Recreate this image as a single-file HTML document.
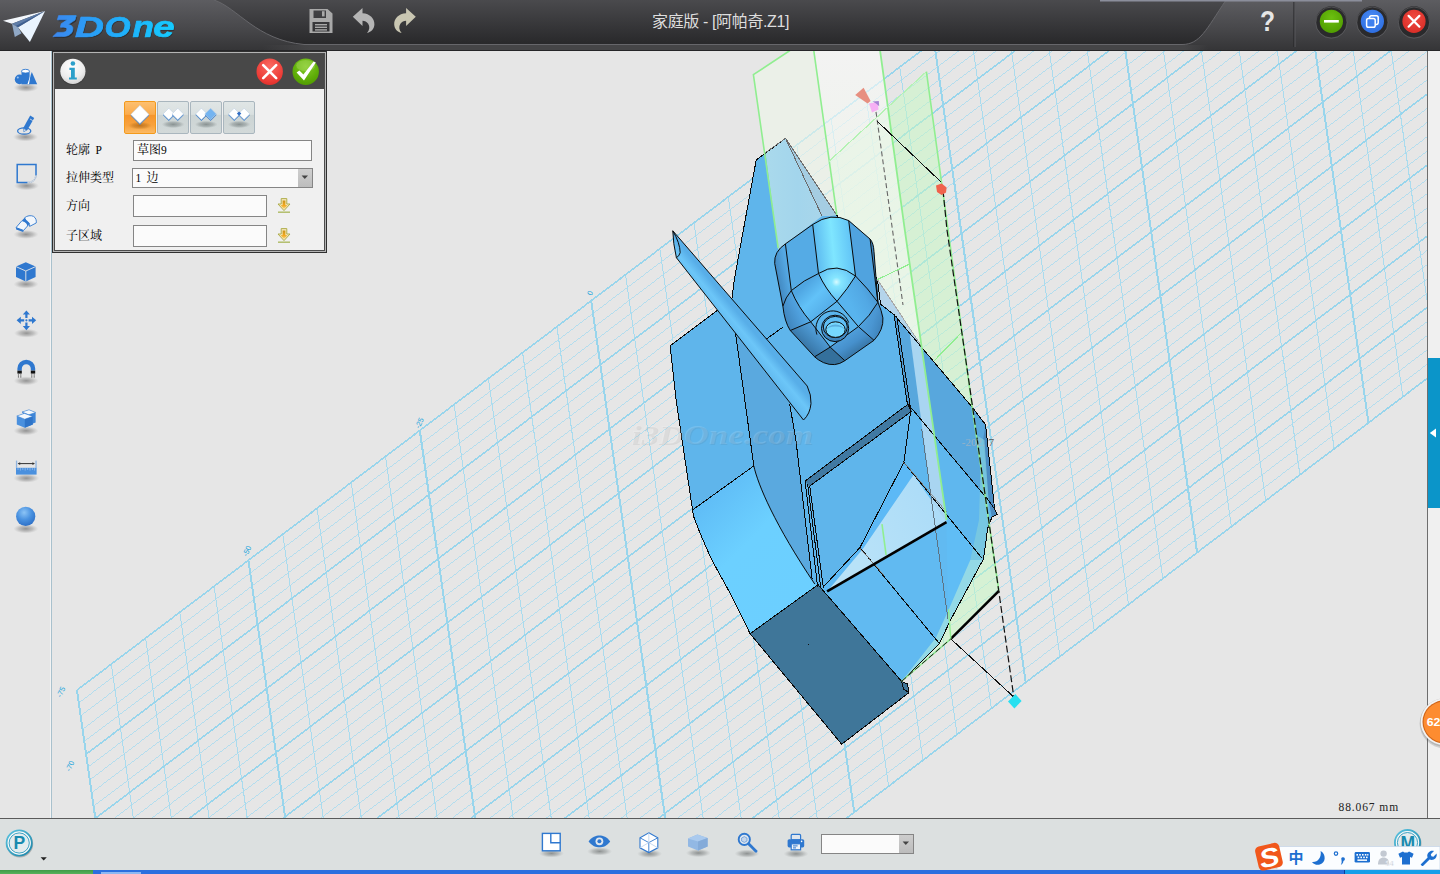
<!DOCTYPE html>
<html><head><meta charset="utf-8"><title>3D One</title><style>html,body{margin:0;padding:0}
body{width:1440px;height:874px;overflow:hidden;position:relative;background:#e6e6e6;font-family:"Liberation Sans",sans-serif}
.abs{position:absolute;display:block}
.mb{width:29.5px;height:31px;border:1px solid #a9b6be;border-radius:2px;background:linear-gradient(#e0e6e6 0%,#d9e0e0 40%,#ccd4d4 42%,#d2d9d9 100%)}
.inp{background:#fbfbfb;border:1px solid #858585}
</style></head>
<body>
<svg class="abs" style="left:0;top:0" width="1440" height="874" viewBox="0 0 1440 874">
<defs><clipPath id="vp"><rect x="52" y="51" width="1375" height="767"/></clipPath>

<linearGradient id="curv" gradientUnits="userSpaceOnUse" x1="700" y1="500" x2="800" y2="600"><stop offset="0" stop-color="#5fbcf6"/><stop offset="0.45" stop-color="#6cd0ff"/><stop offset="1" stop-color="#6ccfff"/></linearGradient>
<linearGradient id="barrel" gradientUnits="userSpaceOnUse" x1="728" y1="352" x2="753" y2="331"><stop offset="0" stop-color="#4f9fdc"/><stop offset="0.35" stop-color="#5db4ec"/><stop offset="0.75" stop-color="#6cc6f8"/><stop offset="1" stop-color="#58aee8"/></linearGradient>
<linearGradient id="tcyl" gradientUnits="userSpaceOnUse" x1="813" y1="250" x2="853" y2="246"><stop offset="0" stop-color="#58b4ee"/><stop offset="0.5" stop-color="#7fe6ff"/><stop offset="1" stop-color="#60c2f6"/></linearGradient>
<linearGradient id="tleft" gradientUnits="userSpaceOnUse" x1="775.5" y1="285" x2="790" y2="282"><stop offset="0" stop-color="#3d80b8"/><stop offset="1" stop-color="#55a9e4"/></linearGradient>
<radialGradient id="tcap" gradientUnits="userSpaceOnUse" cx="836.4" cy="282" r="21"><stop offset="0" stop-color="#d8fbff"/><stop offset="0.22" stop-color="#86e6ff"/><stop offset="1" stop-color="#5cbcf4"/></radialGradient>
<linearGradient id="tbl" gradientUnits="userSpaceOnUse" x1="815" y1="330" x2="800" y2="346"><stop offset="0" stop-color="#4f9cd6"/><stop offset="0.6" stop-color="#3f82b6"/><stop offset="1" stop-color="#356f9c"/></linearGradient>
<linearGradient id="tube" x1="0" y1="0" x2="0" y2="1"><stop offset="0" stop-color="#5ab4ec"/><stop offset="0.6" stop-color="#4a98d6"/><stop offset="1" stop-color="#3a7cb2"/></linearGradient>
<linearGradient id="tul" gradientUnits="userSpaceOnUse" x1="800" y1="290" x2="822" y2="312"><stop offset="0" stop-color="#4fa6e2"/><stop offset="0.5" stop-color="#62c2f8"/><stop offset="1" stop-color="#56b0ea"/></linearGradient>
<linearGradient id="tur" gradientUnits="userSpaceOnUse" x1="848" y1="300" x2="872" y2="288"><stop offset="0" stop-color="#58b4ee"/><stop offset="0.6" stop-color="#52a8e4"/><stop offset="1" stop-color="#4a98d4"/></linearGradient>
<linearGradient id="tlc" gradientUnits="userSpaceOnUse" x1="784" y1="318" x2="806" y2="308"><stop offset="0" stop-color="#3f84bc"/><stop offset="0.6" stop-color="#4e9edb"/><stop offset="1" stop-color="#56aee8"/></linearGradient>
<linearGradient id="trc" gradientUnits="userSpaceOnUse" x1="858" y1="318" x2="882" y2="326"><stop offset="0" stop-color="#52a6e2"/><stop offset="0.6" stop-color="#4a96d2"/><stop offset="1" stop-color="#3f84bc"/></linearGradient>
<linearGradient id="tbr" gradientUnits="userSpaceOnUse" x1="846" y1="332" x2="858" y2="350"><stop offset="0" stop-color="#52a2de"/><stop offset="0.6" stop-color="#4690cc"/><stop offset="1" stop-color="#3a7aac"/></linearGradient>
<linearGradient id="nose" gradientUnits="userSpaceOnUse" x1="770" y1="200" x2="825" y2="200"><stop offset="0" stop-color="#a9d9ec"/><stop offset="0.5" stop-color="#a3d5ec"/><stop offset="1" stop-color="#a9d6ea"/></linearGradient>
<linearGradient id="pale3" gradientUnits="userSpaceOnUse" x1="860" y1="560" x2="946" y2="520"><stop offset="0" stop-color="#b8e2f8"/><stop offset="1" stop-color="#acdcf8"/></linearGradient>
<linearGradient id="r2g" gradientUnits="userSpaceOnUse" x1="0" y1="50" x2="0" y2="340"><stop offset="0" stop-color="#fbfbfa"/><stop offset="0.4" stop-color="#f4faf1"/><stop offset="1" stop-color="#f0fdec"/></linearGradient>

</defs>
<g clip-path="url(#vp)">
<path d="M78.8,702.9L1792.8,-595.1M80.7,715.8L1794.7,-582.2M82.5,728.6L1796.5,-569.4M84.3,741.4L1798.3,-556.6M88,767.1L1802,-530.9M89.8,779.9L1803.8,-518.1M91.7,792.7L1805.7,-505.3M93.5,805.5L1807.5,-492.5M97.2,831.2L1811.2,-466.8M99,844L1813,-454M100.8,856.8L1814.8,-441.2M102.7,869.7L1816.7,-428.3M106.3,895.3L1820.3,-402.7M108.2,908.1L1822.2,-389.9M110,921L1824,-377M111.8,933.8L1825.8,-364.2M115.5,959.4L1829.5,-338.6M117.3,972.3L1831.3,-325.7M119.2,985.1L1833.2,-312.9M121,997.9L1835,-300.1M124.7,1023.6L1838.7,-274.4M126.5,1036.4L1840.5,-261.6M128.4,1049.2L1842.4,-248.8M130.2,1062.1L1844.2,-235.9M133.9,1087.7L1847.9,-210.3M135.7,1100.5L1849.7,-197.5M137.5,1113.4L1851.5,-184.6M139.4,1126.2L1853.4,-171.8M143,1151.8L1857,-146.2M144.9,1164.7L1858.9,-133.3M146.7,1177.5L1860.7,-120.5M148.5,1190.3L1862.5,-107.7M152.2,1216L1866.2,-82M154,1228.8L1868,-69.2M155.9,1241.6L1869.9,-56.4M157.7,1254.4L1871.7,-43.6M161.4,1280.1L1875.4,-17.9M163.2,1292.9L1877.2,-5.1M165,1305.7L1879,7.7M166.9,1318.6L1880.9,20.6" stroke="#a9dbee" stroke-width="0.85" fill="none" shape-rendering="crispEdges"/>
<path d="M111.3,664.1L203,1305.4M145.6,638.2L237.3,1279.5M179.8,612.2L271.5,1253.5M214.1,586.3L305.8,1227.6M282.7,534.3L374.4,1175.6M317,508.4L408.7,1149.7M351.2,482.4L442.9,1123.7M385.5,456.5L477.2,1097.8M454.1,404.5L545.8,1045.8M488.4,378.6L580.1,1019.9M522.6,352.6L614.3,993.9M556.9,326.7L648.6,968M625.5,274.7L717.2,916M659.8,248.8L751.5,890.1M694,222.8L785.7,864.1M728.3,196.9L820,838.2M796.9,144.9L888.6,786.2M831.2,119L922.9,760.3M865.4,93L957.1,734.3M899.7,67.1L991.4,708.4M968.3,15.1L1060,656.4M1002.6,-10.8L1094.3,630.5M1036.8,-36.8L1128.5,604.5M1071.1,-62.7L1162.8,578.6M1139.7,-114.7L1231.4,526.6M1174,-140.6L1265.7,500.7M1208.2,-166.6L1299.9,474.7M1242.5,-192.5L1334.2,448.8M1311.1,-244.5L1402.8,396.8M1345.4,-270.4L1437.1,370.9M1379.6,-296.4L1471.3,344.9M1413.9,-322.3L1505.6,319" stroke="#a9dbee" stroke-width="1" fill="none" shape-rendering="crispEdges"/>
<path d="M77,690.1L1791,-607.9M86.2,754.2L1800.2,-543.8M95.3,818.4L1809.3,-479.6M104.5,882.5L1818.5,-415.5M113.7,946.6L1827.7,-351.4M122.8,1010.8L1836.8,-287.2M132,1074.9L1846,-223.1M141.2,1139L1855.2,-159M150.4,1203.1L1864.4,-94.9M159.5,1267.3L1873.5,-30.7M168.7,1331.4L1882.7,33.4" stroke="#98d5ec" stroke-width="1.6" fill="none" shape-rendering="crispEdges"/>
<path d="M77,690.1L168.7,1331.4M248.4,560.3L340.1,1201.6M419.8,430.5L511.5,1071.8M591.2,300.7L682.9,942M762.6,170.9L854.3,812.2M934,41.1L1025.7,682.4M1105.4,-88.7L1197.1,552.6M1276.8,-218.5L1368.5,422.8" stroke="#98d5ec" stroke-width="2" fill="none" shape-rendering="crispEdges"/>
<text x="61" y="692" font-family="Liberation Sans, sans-serif" font-size="7.5" fill="#21a5dc" text-anchor="middle" transform="rotate(-65 61 692) translate(0,2.5)">-75</text>
<text x="70" y="766" font-family="Liberation Sans, sans-serif" font-size="7.5" fill="#21a5dc" text-anchor="middle" transform="rotate(-65 70 766) translate(0,2.5)">-70</text>
<text x="247" y="551" font-family="Liberation Sans, sans-serif" font-size="7.5" fill="#21a5dc" text-anchor="middle" transform="rotate(-65 247 551) translate(0,2.5)">-50</text>
<text x="419.5" y="423" font-family="Liberation Sans, sans-serif" font-size="7.5" fill="#21a5dc" text-anchor="middle" transform="rotate(-65 419.5 423) translate(0,2.5)">-25</text>
<text x="590" y="293" font-family="Liberation Sans, sans-serif" font-size="7.5" fill="#21a5dc" text-anchor="middle" transform="rotate(-65 590 293) translate(0,2.5)">0</text>

<polygon points="753.4,74.7 789.9,50 813.7,50 836.8,214.8 840,260 778.5,250" fill="#eef7ea" opacity="0.6"/>
<polygon points="813.7,50 880,50 905,230 921.8,346.5 877.5,279.6 845,240 836.8,214.8" fill="url(#r2g)" opacity="0.62"/>
<polygon points="887.8,107.2 905,230 921.8,346.5 877.5,279.6 845,240 836.8,214.8 829,161.3" fill="#e6f5e4" opacity="0.55"/>
<polygon points="887.8,107.2 926.4,71.6 972.2,407.2 921.8,346.5 905,230" fill="#c6fac2" opacity="0.5"/>
<polygon points="987.7,528.3 983.6,558.5 947.9,618.9 939.4,643.5 950.8,638.9 998.9,590.9 990.5,531" fill="#c6fcc2" opacity="0.5"/>
<polygon points="901.6,681.3 939.4,643.5 950.8,638.9" fill="#d2fcce" opacity="0.5"/>
<polygon points="785.5,138.3 836.8,215.2 877.5,279.6 880.6,304.3 894,314.6 972.2,407.2 985.6,424.7 994.6,509 997.3,514.5 991.8,517.3 987.7,528.3 983.6,558.5 982.9,560 950.8,619.5 939.4,643.5 901.6,681.3 907.5,684 908.9,692.7 841.7,744.2 750.1,633.7 747.8,628.9 744.5,622.2 740.6,614.3 736.5,605.9 732.4,597.8 728.2,589.8 723.6,581.4 718.9,572.9 714.4,564.6 710.4,556.6 706.7,548.7 703.3,540.7 700.1,533.1 697.4,526.4 695.3,520.9 694,517.4 693.4,515.5 693.2,514.3 693,512.7 692.6,509.9 691.8,505.1 690.9,499 689.9,492.6 689.1,486.9 688.5,483 676.1,400 670.1,345.8 715.4,311.8 731.8,299.5 734.2,280 756.2,160" fill="#5fb5eb" />
<path d="M735.5,333.2 L744.8,400 L753.8,465.9 C758,485 775,525 814.8,584.1 L812.1,578.6 L795.9,440 L789.6,403.6 Z" fill="#5aa9df"/>
<path d="M692.6,509.9 L753.8,465.9 C758,485 775,525 814.8,584.1 L817.6,584.6 L750.3,633.5 L732.4,597.8 L710.4,556.6 L695.3,520.9 Z" fill="url(#curv)"/>
<polygon points="894,314.6 972.2,407.2 985.6,424.7 994.6,509 987.7,499.4 908.1,404.2 907.4,404.1" fill="#58a7dd" />
<polygon points="894,314.6 896.6,315.6 910.8,410.2 908.1,404.2" fill="#4f9ad2" />
<polygon points="985.6,424.7 994.6,509 997.3,514.5 991.8,517.3 988.6,500.4 983,440" fill="#4a8cc2" />
<polygon points="805.1,481 908.1,404.2 912.2,410.8 809.2,486.5" fill="#4079a2" />
<polygon points="910.8,410.2 987.7,499.4 983.6,558.5 982.2,558.5 903.9,462.4" fill="#5fb7ee" />
<polygon points="903.9,462.4 913.6,474.7 862.8,548.9 827.1,591.4 823,587.3 860,547.5" fill="#5cb9f6" />
<polygon points="827.1,591.4 886,557.3 946.5,522.2 982.2,558.5 950.8,619.5 939.4,643.5 901.6,681.3 817.6,584.6" fill="#61baf1" />
<polygon points="946.5,522.2 903.9,462.4 982.2,558.5 947.9,618.9" fill="#60bdf5" />
<path d="M765.5,152.6 L785.5,138.3 L822.1,216.1 L811,224.4 L785.5,244.5 L778.2,250 Z" fill="url(#nose)"/>
<polygon points="785.5,138.3 836.8,215.2 831.3,216.1 822.1,216.1" fill="#a5cde2" />
<polygon points="877.5,279.6 921.8,346.5 894,314.6 880.6,304.3 878.5,301.2" fill="#b4d4ea" />
<polygon points="909.4,331 921.8,346.5 946.5,521 935.5,528.6" fill="#a9d5f1" />
<polygon points="913.6,474.7 946.5,522.2 827.1,591.4 862.8,548.9" fill="url(#pale3)" />
<polygon points="970.3,560 982.9,560 950.8,619.5 939.4,643.5 901.6,681.3 935.9,637.8 947.4,612.6" fill="#93d9e6" />
<polygon points="982.9,560 970.3,560 979,520 980.5,470 978,436 984.4,440 988.6,500.4 987.7,528.3" fill="#7fccde" opacity="0.75"/>
<polygon points="818.1,584.7 750.1,633.7 841.7,744.2 908.9,692.7 907.5,684 901.6,681.3" fill="#3f7699" />
<polyline points="785.5,138.3 836.8,215.2 877.5,279.6 880.6,304.3 894,314.6 972.2,407.2 985.6,424.7 994.6,509 997.3,514.5 991.8,517.3 987.7,528.3 983.6,558.5 982.9,560 950.8,619.5 939.4,643.5 901.6,681.3 907.5,684 908.9,692.7 841.7,744.2 750.1,633.7 747.8,628.9 744.5,622.2 740.6,614.3 736.5,605.9 732.4,597.8 728.2,589.8 723.6,581.4 718.9,572.9 714.4,564.6 710.4,556.6 706.7,548.7 703.3,540.7 700.1,533.1 697.4,526.4 695.3,520.9 694,517.4 693.4,515.5 693.2,514.3 693,512.7 692.6,509.9 691.8,505.1 690.9,499 689.9,492.6 689.1,486.9 688.5,483 676.1,400 670.1,345.8 715.4,311.8 731.8,299.5 734.2,280 756.2,160 785.5,138.3" fill="none" stroke="#0a0a0a" stroke-width="1" shape-rendering="crispEdges" />
<polyline points="735.5,333.2 744.8,400 753.8,465.9" fill="none" stroke="#0a0a0a" stroke-width="1" shape-rendering="crispEdges" />
<polyline points="692.6,509.9 753.8,465.9" fill="none" stroke="#0a0a0a" stroke-width="1" shape-rendering="crispEdges" />
<polyline points="789.6,403.6 795.9,440 812.1,578.6" fill="none" stroke="#0a0a0a" stroke-width="1" shape-rendering="crispEdges" />
<polyline points="805.1,481 908.1,404.2" fill="none" stroke="#0a0a0a" stroke-width="1" shape-rendering="crispEdges" />
<polyline points="809.2,486.5 912.2,410.8" fill="none" stroke="#0a0a0a" stroke-width="1" shape-rendering="crispEdges" />
<polyline points="805.1,481 817.6,586.8" fill="none" stroke="#0a0a0a" stroke-width="1" shape-rendering="crispEdges" />
<polyline points="807.6,484 820.6,586.6" fill="none" stroke="#0a0a0a" stroke-width="1" shape-rendering="crispEdges" />
<polyline points="809.8,486.5 823.3,587.6" fill="none" stroke="#0a0a0a" stroke-width="1" shape-rendering="crispEdges" />
<polyline points="910.8,410.2 903.9,462.4 860,547.5 823,587.3" fill="none" stroke="#0a0a0a" stroke-width="1" shape-rendering="crispEdges" />
<polyline points="860,547.5 919,618.9 939.4,643.5" fill="none" stroke="#0a0a0a" stroke-width="1" shape-rendering="crispEdges" />
<polyline points="908.1,404.2 987.7,499.4" fill="none" stroke="#0a0a0a" stroke-width="1" shape-rendering="crispEdges" />
<polyline points="903.9,462.4 982.2,558.5" fill="none" stroke="#0a0a0a" stroke-width="1" shape-rendering="crispEdges" />
<polyline points="894,314.6 907.4,404.1 910.8,410.2" fill="none" stroke="#0a0a0a" stroke-width="1" shape-rendering="crispEdges" />
<polyline points="896.6,315.6 910.8,410.2" fill="none" stroke="#0a0a0a" stroke-width="1" shape-rendering="crispEdges" />
<polyline points="765.7,339.5 783.3,326.9" fill="none" stroke="#0a0a0a" stroke-width="1" shape-rendering="crispEdges" />
<polyline points="988.6,500.4 994.6,509" fill="none" stroke="#0a0a0a" stroke-width="1" shape-rendering="crispEdges" />
<polyline points="818.1,584.7 750.1,633.7 841.7,744.2 908.9,692.7 907.5,684 901.6,681.3 818.1,584.7" fill="none" stroke="#0a0a0a" stroke-width="1" shape-rendering="crispEdges" />
<polyline points="901.6,681.3 903.5,689 908.9,692.7" fill="none" stroke="#0a0a0a" stroke-width="1" shape-rendering="crispEdges" />
<path d="M753.8,465.9 C758,485 775,525 814.8,584.1" fill="none" stroke="#0a0a0a" stroke-width="1"/>
<polyline points="765.5,152.6 785.5,138.3 836.8,215.2" fill="none" stroke="#6f6f6f" stroke-width="1" shape-rendering="crispEdges" />
<polyline points="785.5,138.3 822.1,216.1" fill="none" stroke="#6a6a6a" stroke-width="1" shape-rendering="crispEdges" />
<polyline points="877.5,279.6 921.8,346.5" fill="none" stroke="#a8a8a8" stroke-width="1" shape-rendering="crispEdges" />
<polyline points="921.8,429.4 947.9,618.9" fill="none" stroke="#5c6c78" stroke-width="0.9" shape-rendering="crispEdges" />
<polyline points="903.9,462.4 946.5,511.8" fill="none" stroke="#8a7f78" stroke-width="0.8" shape-rendering="crispEdges" />
<polyline points="860,547.5 885,575" fill="none" stroke="#8a7f78" stroke-width="0.8" shape-rendering="crispEdges" />
<rect x="808" y="644" width="1" height="1" fill="#111"/>
<path d="M672.8,230.8 L807.2,386 Q811.5,395 811,403.6 Q810,414 803.5,420 L676.4,257.7 Q673,243 672.8,230.8 Z" fill="url(#barrel)" stroke="#0a0a0a" stroke-width="1"/>
<path d="M672.8,230.8 Q680,243 680.2,252.7 Q679,256.5 676.4,257.7" fill="none" stroke="#0a0a0a" stroke-width="1"/>
<path d="M 785.4,243.9 L 812.7,224.5 Q 831.2,211.8 848.7,220.6 L 870.1,239.1 Q 873.6,243 874,251.7 L 877.9,302.3 Q 881.8,311.1 882.9,317.9 Q 883.7,329.6 874,340.3 L 844.8,360.7 Q 835.1,367.5 823.4,362.6 Q 817.5,359.7 814.6,356.8 L 790.3,330.5 Q 784.5,321.8 782.9,306.2 L 774.7,263.4 Q 773.8,251.7 785.4,243.9 Z" fill="#52a6e2"/>
<path d="M 774.7,263.4 Q 773.8,251.7 785.4,243.9 L 791.3,290.6 Q 785.4,297.4 782.9,306.2 Z" fill="url(#tleft)"/>
<polygon points="785.4,243.9 812.7,224.5 818.5,273.5 803.9,280.5 791.3,290.6" fill="#55abe5" />
<path d="M 812.7,224.5 Q 831.2,211.8 848.7,220.6 L 855.5,276 Q 837,261.4 818.5,273.5 Z" fill="url(#tcyl)"/>
<polygon points="848.7,220.6 870.1,239.1 877.9,302.3 866.2,288.7 855.5,276" fill="#50a3df" />
<path d="M 870.1,239.1 Q 873.6,243 874,251.7 L 877.9,302.3 Z" fill="#4189c3"/>
<path d="M 818.5,273.5 Q 837,261.4 855.5,276 Q 847.7,288.7 837,301.3 Q 825.3,288.7 818.5,273.5 Z" fill="url(#tcap)"/>
<path d="M 791.3,290.6 Q 803.9,279.9 818.5,273.5 Q 825.3,288.7 837,301.3 L 810.7,321.8 Q 798.1,307.2 791.3,290.6 Z" fill="url(#tul)"/>
<path d="M 855.5,276 Q 868.2,288.7 877.9,302.3 Q 870.1,315.9 858.4,326.6 L 837,301.3 Q 847.7,288.7 855.5,276 Z" fill="url(#tur)"/>
<polygon points="837,301.3 858.4,326.6 830.2,347.1 810.7,321.8" fill="#5ab5ed" />
<path d="M 782.9,306.2 Q 785.4,297.4 791.3,290.6 Q 798.1,307.2 810.7,321.8 L 790.3,330.5 Q 784.5,321.8 782.9,306.2 Z" fill="url(#tlc)"/>
<path d="M 790.3,330.5 L 810.7,321.8 L 830.2,347.1 L 814.6,356.8 Z" fill="url(#tbl)"/>
<path d="M 814.6,356.8 L 830.2,347.1 L 844.8,360.7 Q 835.1,367.5 823.4,362.6 Q 817.5,359.7 814.6,356.8 Z" fill="#34709c"/>
<path d="M 830.2,347.1 L 858.4,326.6 L 874,340.3 L 844.8,360.7 Z" fill="url(#tbr)"/>
<path d="M 858.4,326.6 Q 870.1,315.9 877.9,302.3 Q 881.8,311.1 882.9,317.9 Q 883.7,329.6 874,340.3 Z" fill="url(#trc)"/>
<path d="M 785.4,243.9 L 791.3,290.6" fill="none" stroke="#0a0a0a" stroke-width="1"/>
<path d="M 812.7,224.5 L 818.5,273.5" fill="none" stroke="#0a0a0a" stroke-width="1"/>
<path d="M 848.7,220.6 L 855.5,276" fill="none" stroke="#0a0a0a" stroke-width="1"/>
<path d="M 870.1,239.1 L 877.9,302.3" fill="none" stroke="#0a0a0a" stroke-width="1"/>
<path d="M 782.9,306.2 Q 785.4,297.4 791.3,290.6 Q 803.9,279.9 818.5,273.5 Q 837,261.4 855.5,276 Q 868.2,288.7 877.9,302.3" fill="none" stroke="#0a0a0a" stroke-width="1"/>
<path d="M 818.5,273.5 Q 825.3,288.7 837,301.3 L 858.4,326.6 L 874,340.3" fill="none" stroke="#0a0a0a" stroke-width="1"/>
<path d="M 855.5,276 Q 847.7,288.7 837,301.3 L 810.7,321.8 L 790.3,330.5" fill="none" stroke="#0a0a0a" stroke-width="1"/>
<path d="M 791.3,290.6 Q 798.1,307.2 810.7,321.8 L 830.2,347.1 L 844.8,360.7" fill="none" stroke="#0a0a0a" stroke-width="1"/>
<path d="M 877.9,302.3 Q 870.1,315.9 858.4,326.6 L 830.2,347.1 L 814.6,356.8" fill="none" stroke="#0a0a0a" stroke-width="1"/>
<path d="M 785.4,243.9 L 812.7,224.5 Q 831.2,211.8 848.7,220.6 L 870.1,239.1 Q 873.6,243 874,251.7 L 877.9,302.3 Q 881.8,311.1 882.9,317.9 Q 883.7,329.6 874,340.3 L 844.8,360.7 Q 835.1,367.5 823.4,362.6 Q 817.5,359.7 814.6,356.8 L 790.3,330.5 Q 784.5,321.8 782.9,306.2 L 774.7,263.4 Q 773.8,251.7 785.4,243.9 Z" fill="none" stroke="#0a0a0a" stroke-width="1"/>
<path d="M816.9,334.6 A16.8,17.6 0 0 1 848.7,322.6" fill="none" stroke="#0a0a0a" stroke-width="1"/>
<ellipse cx="835.1" cy="328.4" rx="13.6" ry="13.2" fill="url(#tube)" stroke="#0a0a0a" stroke-width="1"/>
<ellipse cx="835.3" cy="327" rx="12" ry="10.6" fill="#5fbef4" stroke="#0a0a0a" stroke-width="1"/>
<ellipse cx="835.5" cy="329.6" rx="9.7" ry="7.8" fill="#76d8ff" stroke="#0a0a0a" stroke-width="1"/>
<path d="M826,330.6 A9.7,7.8 0 0 1 845,330.6 A9.7,5 0 0 0 826,330.6 Z" fill="#3f86c0" opacity="0.5"/>
<polyline points="827.1,591.4 946.5,522.2" fill="none" stroke="#000" stroke-width="2.6" />
<polyline points="950.8,638.9 998.9,590.9" fill="none" stroke="#000" stroke-width="2.6" />
<polyline points="789.9,50.5 753.4,74.7 778.2,248.2" fill="none" stroke="#90ee90" stroke-width="1.6" />
<polyline points="813.7,50 836.8,214.8" fill="none" stroke="#90ee90" stroke-width="1.6" />
<polyline points="882,524.2 886.1,555" fill="none" stroke="#90ee90" stroke-width="1.6" />
<polyline points="880,50 904.8,230 946.5,520" fill="none" stroke="#90ee90" stroke-width="1.8" />
<polyline points="829,161.3 926.4,71.6" fill="none" stroke="#b4f2b4" stroke-width="1.2" shape-rendering="crispEdges" />
<polyline points="926.4,71.6 948.1,230 972.2,407.2 998.9,590.9" fill="none" stroke="#90ee90" stroke-width="1.6" />
<polyline points="877.5,279.6 909.4,264.1" fill="none" stroke="#90ee90" stroke-width="1.2" shape-rendering="crispEdges" />
<polyline points="934.1,360.9 961.9,332.1" fill="none" stroke="#90ee90" stroke-width="1.2" shape-rendering="crispEdges" />
<polyline points="948.5,609.2 950.8,638.9" fill="none" stroke="#90ee90" stroke-width="1.4" />
<polyline points="901.6,681.3 950.8,638.9" fill="none" stroke="#90ee90" stroke-width="1.4" />
<polyline points="901.6,681.3 950.8,638.9" fill="none" stroke="#222" stroke-width="1" stroke-dasharray="6 3"/>
<polyline points="876,111.8 892.5,230 903,305" fill="none" stroke="#666" stroke-width="1.1" stroke-dasharray="5 3"/>
<polyline points="877,121 940.9,181.9" fill="none" stroke="#111" stroke-width="1" shape-rendering="crispEdges" />
<polyline points="943,190 947,230 972.6,407 1013.8,697" fill="none" stroke="#111" stroke-width="1.2" stroke-dasharray="7 3"/>
<polyline points="950.8,638.9 1017,700" fill="none" stroke="#111" stroke-width="1" shape-rendering="crispEdges" />
<polygon points="855.2,95 863.6,87.8 870.6,101 867.6,103.6" fill="#e78f80"/>
<polygon points="869,103.4 877.6,102 878.6,109.6 872,112.4" fill="#f6b0f4"/><polygon points="872.6,101.6 878.8,101 879.2,106.2 876,103.4" fill="#a884d4"/>
<polygon points="936,185.4 941.6,183.4 946.6,187.4 946,192.6 941.6,195 937,192" fill="#f0624c"/>
<polygon points="1015.4,694 1021.6,701 1014.4,708.4 1008,701.4" fill="#28e0f0"/>
<text x="962" y="446" font-family="Liberation Serif, serif" font-size="11" fill="#9fb4c4" opacity="0.9">-202.</text><text x="988.5" y="446" font-family="Liberation Serif, serif" font-size="11" fill="#555">7</text>
<text x="631" y="444" font-family="Liberation Serif, serif" font-style="italic" font-weight="bold" font-size="27" fill="#ffffff" opacity="0.13" textLength="182" lengthAdjust="spacingAndGlyphs">i3DOne.com</text>
<text x="632" y="445" font-family="Liberation Serif, serif" font-style="italic" font-weight="bold" font-size="27" fill="#444" opacity="0.08" textLength="182" lengthAdjust="spacingAndGlyphs">i3DOne.com</text>
<text x="1338.5" y="810.6" font-family="Liberation Serif, serif" font-size="11.5" fill="#222" letter-spacing="0.9">88.067 mm</text>
</g>
</svg>
<svg class="abs" style="left:0;top:0" width="1440" height="51" viewBox="0 0 1440 51">
<defs>
<linearGradient id="tb1" x1="0" y1="0" x2="0" y2="1"><stop offset="0" stop-color="#5d5d61"/><stop offset="0.55" stop-color="#48484b"/><stop offset="1" stop-color="#343436"/></linearGradient>
<linearGradient id="stripg" gradientUnits="userSpaceOnUse" x1="262" y1="0" x2="1208" y2="0"><stop offset="0" stop-color="#454547" stop-opacity="0"/><stop offset="0.05" stop-color="#454547" stop-opacity="1"/><stop offset="0.975" stop-color="#454547" stop-opacity="1"/><stop offset="1" stop-color="#454547" stop-opacity="0"/></linearGradient>
<linearGradient id="tb2" x1="0" y1="0" x2="0" y2="1"><stop offset="0" stop-color="#4a4a4d"/><stop offset="1" stop-color="#28282a"/></linearGradient>
<linearGradient id="lg3dU" gradientUnits="userSpaceOnUse" x1="52" y1="0" x2="176" y2="0"><stop offset="0" stop-color="#3c86ee"/><stop offset="0.45" stop-color="#22a8fa"/><stop offset="1" stop-color="#14ccff"/></linearGradient>
<radialGradient id="bg_g" cx="0.5" cy="0.35" r="0.7"><stop offset="0" stop-color="#6cc010"/><stop offset="1" stop-color="#4e9a00"/></radialGradient>
<radialGradient id="bg_b" cx="0.5" cy="0.35" r="0.7"><stop offset="0" stop-color="#4a8cf4"/><stop offset="1" stop-color="#2c6ce0"/></radialGradient>
<radialGradient id="bg_r" cx="0.5" cy="0.35" r="0.7"><stop offset="0" stop-color="#f04a40"/><stop offset="1" stop-color="#d82c26"/></radialGradient>
</defs>
<rect width="1440" height="51" fill="url(#tb1)"/>
<path d="M214,0 C238,8 256,40 304,44.5 L1182,44.5 C1200,44.5 1206,30 1226,0 Z" fill="url(#tb2)"/>
<path d="M214,0 C238,8 256,40 304,44.5 L1182,44.5 C1200,44.5 1206,30 1226,0" fill="none" stroke="#66666a" stroke-width="1"/>
<rect x="262" y="45" width="946" height="5" fill="url(#stripg)"/>
<rect x="0" y="50" width="1440" height="1" fill="#262628"/>
<rect x="1100" y="0" width="262" height="1.5" fill="#8b8e9b"/>
<!-- logo plane -->
<g>
<polygon points="3,20.8 45.1,11.1 12,23.8" fill="#f4f8fd"/>
<polygon points="12,23.8 45.1,11.1 18,27.2" fill="#5f7da8"/>
<polygon points="12,23.8 18,27.2 21.5,33.3 14.8,37" fill="#90a8c6"/>
<polygon points="45.1,11.1 29.9,41.9 18,27.2" fill="#eaf4fe"/>
<polygon points="45.1,11.1 18,27.2 16,25.8" fill="#3f5f90"/>
</g>
<!-- 3DOne -->
<g id="logo3d">
<mask id="lgmask" maskUnits="userSpaceOnUse" x="40" y="0" width="160" height="51"><g fill="#fff" stroke="#fff" stroke-width="0.7" stroke-linejoin="round"><path d="M58.6,15.6 L76.2,15.6 L75,20 L68.2,24.6 C71.8,25 73.6,27.2 72.8,30.2 C71.8,34.4 67.8,36.6 61.8,36.6 L52.8,36.6 L57.2,32.4 L62,32.4 C64.8,32.4 66.4,31.6 66.8,29.8 C67.2,28 66,27.2 63.2,27.2 L60.4,27.2 L61.2,23.8 L67.2,19.8 L57.4,19.8 Z"/>
<text transform="translate(75.0,36.8) scale(1.357,1)" font-family="Liberation Sans, sans-serif" font-weight="bold" font-style="italic" font-size="29.5">D</text>
<text transform="translate(104.6,36.8) scale(1.136,1)" font-family="Liberation Sans, sans-serif" font-weight="bold" font-style="italic" font-size="29.5">O</text>
<text transform="translate(132.6,36.8) scale(1.188,1)" font-family="Liberation Sans, sans-serif" font-weight="bold" font-style="italic" font-size="29.5">n</text>
<text transform="translate(153.2,36.8) scale(1.300,1)" font-family="Liberation Sans, sans-serif" font-weight="bold" font-style="italic" font-size="29.5">e</text></g></mask>
<g transform="translate(1,1.4)" fill="#1c1c1e" opacity="0.55"><path d="M58.6,15.6 L76.2,15.6 L75,20 L68.2,24.6 C71.8,25 73.6,27.2 72.8,30.2 C71.8,34.4 67.8,36.6 61.8,36.6 L52.8,36.6 L57.2,32.4 L62,32.4 C64.8,32.4 66.4,31.6 66.8,29.8 C67.2,28 66,27.2 63.2,27.2 L60.4,27.2 L61.2,23.8 L67.2,19.8 L57.4,19.8 Z"/>
<text transform="translate(75.0,36.8) scale(1.357,1)" font-family="Liberation Sans, sans-serif" font-weight="bold" font-style="italic" font-size="29.5">D</text>
<text transform="translate(104.6,36.8) scale(1.136,1)" font-family="Liberation Sans, sans-serif" font-weight="bold" font-style="italic" font-size="29.5">O</text>
<text transform="translate(132.6,36.8) scale(1.188,1)" font-family="Liberation Sans, sans-serif" font-weight="bold" font-style="italic" font-size="29.5">n</text>
<text transform="translate(153.2,36.8) scale(1.300,1)" font-family="Liberation Sans, sans-serif" font-weight="bold" font-style="italic" font-size="29.5">e</text></g>
<rect x="40" y="0" width="160" height="51" fill="url(#lg3dU)" mask="url(#lgmask)"/>
</g>
<!-- save -->
<g fill="#a9a9a9">
<path d="M309.5,9 H327.5 L332.5,13.5 V33 H309.5 Z M313.5,10.5 V18 H326 V10.5 Z M312.5,22 V31.5 H329.5 V22 Z" fill-rule="evenodd"/>
<rect x="322" y="11.2" width="2.6" height="5.2"/>
<rect x="315" y="24" width="12" height="1.4"/><rect x="315" y="26.6" width="12" height="1.4"/><rect x="315" y="29.2" width="12" height="1.4"/>
</g>
<!-- undo -->
<path d="M352.8,16.8 L362.5,8 L362.5,13.2 C370,13.6 374.6,18.5 374.4,24.5 C374.2,29 371.5,31.6 367,33 C369.6,30.2 370,26.5 368.2,23.8 C366.8,21.8 364.8,21 362.5,20.8 L362.5,26 Z" fill="#b5b5b5"/>
<!-- redo -->
<path d="M415.8,16.8 L406.1,8 L406.1,13.2 C398.6,13.6 394,18.5 394.2,24.5 C394.4,29 397.1,31.6 401.6,33 C399,30.2 398.6,26.5 400.4,23.8 C401.8,21.8 403.8,21 406.1,20.8 L406.1,26 Z" fill="#c9c6b2"/>

<text x="652" y="27" font-family="'Liberation Sans', 'Noto Sans CJK SC', sans-serif" font-size="16" fill="#dedede" textLength="137.5" lengthAdjust="spacing">家庭版 - [阿帕奇.Z1]</text>

<!-- help -->
<text x="1267.5" y="31.5" text-anchor="middle" font-family="Liberation Sans, sans-serif" font-weight="bold" font-size="30" fill="#e6e6e6" transform="translate(1267.5,0) scale(0.82,1) translate(-1267.5,0)">?</text>
<rect x="1293.5" y="2" width="1" height="45" fill="#232325"/><rect x="1294.5" y="2" width="1" height="45" fill="#58585c"/>
<!-- window buttons -->
<g>
<circle cx="1331.4" cy="21.8" r="15.6" fill="#2a2a2c"/><circle cx="1331.4" cy="22.6" r="15.6" fill="none" stroke="#6a6a6e" stroke-width="0.8" opacity="0.7"/><circle cx="1331.4" cy="21.3" r="11.6" fill="url(#bg_g)"/>
<rect x="1324" y="20" width="14.8" height="2.6" fill="#fff"/>
<circle cx="1372.4" cy="21.8" r="15.6" fill="#2a2a2c"/><circle cx="1372.4" cy="22.6" r="15.6" fill="none" stroke="#6a6a6e" stroke-width="0.8" opacity="0.7"/><circle cx="1372.4" cy="21.3" r="11.6" fill="url(#bg_b)"/>
<rect x="1369.6" y="15.8" width="8.6" height="8.6" rx="1.8" fill="none" stroke="#fff" stroke-width="1.5"/>
<rect x="1366.6" y="18.6" width="8.6" height="8.6" rx="1.8" fill="#3f80ee" stroke="#fff" stroke-width="1.5"/>
<circle cx="1414" cy="21.8" r="15.6" fill="#2a2a2c"/><circle cx="1414" cy="22.6" r="15.6" fill="none" stroke="#6a6a6e" stroke-width="0.8" opacity="0.7"/><circle cx="1414" cy="21.3" r="11.6" fill="url(#bg_r)"/>
<path d="M1408.6,15.9 L1419.4,26.7 M1419.4,15.9 L1408.6,26.7" stroke="#fff" stroke-width="2.2" stroke-linecap="round"/>
</g>
</svg>
<svg class="abs" style="left:0;top:51px" width="52" height="767" viewBox="0 51 52 767">
<defs><radialGradient id="shd"><stop offset="0" stop-color="#606060" stop-opacity="0.62"/><stop offset="0.55" stop-color="#777" stop-opacity="0.36"/><stop offset="1" stop-color="#999" stop-opacity="0"/></radialGradient>
<radialGradient id="sph" cx="0.42" cy="0.3" r="0.75"><stop offset="0" stop-color="#8cc4f6"/><stop offset="0.5" stop-color="#4a92e0"/><stop offset="1" stop-color="#2a6cc4"/></radialGradient>
</defs>
<rect x="0" y="51" width="52" height="767" fill="#e6e6e6"/>
<rect x="50" y="51" width="1" height="767" fill="#f3f3f3"/>
<rect x="51" y="51" width="1" height="767" fill="#a9c1cd"/>
<ellipse cx="26" cy="87.6" rx="12.5" ry="4.5" fill="url(#shd)"/>
<circle cx="19.6" cy="79.4" r="4.8" fill="#2f78cf"/><circle cx="17.8" cy="77.6" r="1" fill="#9cc4f0"/><path d="M21.5,71.5 V84.3 H29.6 V71.5 Z" fill="#2f78cf"/><ellipse cx="25.5" cy="71.2" rx="4" ry="1.9" fill="#fff" stroke="#2f78cf" stroke-width="0.9"/><path d="M31.8,72 L37.2,84.3 H27.2 Z" fill="#2f78cf"/><path d="M30.6,74.6 L27.4,84.3 H29 Z" fill="#fff"/>
<ellipse cx="25.5" cy="137.0" rx="12.5" ry="4.5" fill="url(#shd)"/>
<ellipse cx="24.2" cy="131" rx="6.6" ry="3.2" fill="none" stroke="#2f78cf" stroke-width="1.3"/><path d="M30.2,115.6 L34.2,118 L27.4,130 L23.6,132.2 L23.4,127.8 Z" fill="#2f78cf"/><path d="M24.6,128.6 L25.8,130.6 L23.9,131.6 Z" fill="#e6e6e6"/><path d="M30,119 L32.8,120.6" stroke="#e6e6e6" stroke-width="0.8"/>
<ellipse cx="26.5" cy="185.8" rx="12.5" ry="4.5" fill="url(#shd)"/>
<path d="M17.2,164.6 H36 V175 C36,179 33,182.4 28,182.4 H17.2 Z" fill="#e6e6e6" stroke="#2f78cf" stroke-width="1.5"/><path d="M36,175.5 C36,179 33,182.4 27.5,182.4" fill="none" stroke="#e6e6e6" stroke-width="2"/><path d="M36,175.5 C36,179 33,182.4 27.5,182.4" fill="none" stroke="#9fb6d2" stroke-width="1.1" stroke-dasharray="1.2 0.8"/>
<ellipse cx="26" cy="234.4" rx="12.5" ry="4.5" fill="url(#shd)"/>
<path d="M16,227.6 L22,220.6 L29.6,223.6 L23.6,230.4 Z" fill="#f2f6fb" stroke="#2f78cf" stroke-width="0.9"/><path d="M16,227.6 L23.6,230.4 L23.2,232 L16.2,229.4 Z" fill="#2f78cf"/><path d="M24.6,217.8 C27,215.6 31,215 33.6,216.4 C35.8,217.8 36.8,220.8 36.2,223 L29.6,226.4 C30,223.6 28.4,221.2 25.6,220.6 Z" fill="#f2f6fb" stroke="#2f78cf" stroke-width="0.9"/><path d="M22,220.6 L24.6,217.8 L26.6,220.4 L29.6,223.6 L27.4,226.2 C27.2,224 25.4,221.8 22,220.6 Z" fill="#2f78cf"/>
<ellipse cx="26" cy="284.2" rx="12.5" ry="4.5" fill="url(#shd)"/>
<path d="M25.8,262.2 L35.6,266.6 L35.6,277 L25.8,281.4 L16,277 L16,266.6 Z" fill="#2f78cf"/><path d="M16,266.6 L25.8,271 L35.6,266.6 M25.8,271 V281.4" fill="none" stroke="#e6e6e6" stroke-width="0.9"/>
<ellipse cx="26.5" cy="333.2" rx="12.5" ry="4.5" fill="url(#shd)"/>
<g fill="#2f78cf"><path d="M26.4,310.4 L30,314.6 H27.5 V318 H25.3 V314.6 H22.8 Z"/><path d="M26.4,330.2 L30,326 H27.5 V322.6 H25.3 V326 H22.8 Z"/><path d="M16.6,320.3 L20.8,316.7 V319.2 H24.2 V321.4 H20.8 V323.9 Z"/><path d="M36.2,320.3 L32,316.7 V319.2 H28.6 V321.4 H32 V323.9 Z"/><circle cx="26.4" cy="320.3" r="1.1"/></g>
<ellipse cx="26.2" cy="380.8" rx="12.5" ry="4.5" fill="url(#shd)"/>
<path d="M17.4,370.6 V368.6 A8.9,8.9 0 0 1 35.2,368.6 V370.6 H30.8 V368.8 A4.5,4.5 0 0 0 21.8,368.8 V370.6 Z" fill="#2f78cf"/><rect x="17.4" y="370.6" width="4.4" height="3" fill="#111"/><rect x="30.8" y="370.6" width="4.4" height="3" fill="#111"/><path d="M18.4,374.4 V378 M20.8,374.4 V378 M31.8,374.4 V378 M34.2,374.4 V378" stroke="#333" stroke-width="0.9" stroke-dasharray="1.2 0.7"/>
<ellipse cx="26" cy="430.8" rx="12.5" ry="4.5" fill="url(#shd)"/>
<path d="M22,412 L29,409.8 L35.6,412.4 L35.6,422.6 L29,425 Z" fill="#3f86d8"/><path d="M22,412 L29,409.8 L35.6,412.4 L28.8,414.8 Z" fill="#f4f8fc" stroke="#2f78cf" stroke-width="0.5"/><path d="M16.8,416 L24.4,413.4 L32.8,416.4 L32.8,424.4 L24.8,427.8 L16.8,424.6 Z" fill="#4a90de"/><path d="M16.8,416 L24.4,413.4 L32.8,416.4 L24.8,419.2 Z" fill="#f4f8fc" stroke="#2f78cf" stroke-width="0.5"/><path d="M24.8,419.2 L32.8,416.4 L32.8,424.4 L24.8,427.8 Z" fill="#2f74c8"/>
<ellipse cx="26.3" cy="478.2" rx="13.0" ry="4.5" fill="url(#shd)"/>
<rect x="16" y="467.8" width="20.6" height="6.8" fill="#4a90de"/><path d="M18,468 V470 M20.4,468 V470.6 M22.8,468 V470 M25.2,468 V470.6 M27.6,468 V470 M30,468 V470.6 M32.4,468 V470 M34.6,468 V470.6" stroke="#9cc2ee" stroke-width="0.7"/><rect x="15.9" y="460.6" width="1.3" height="7.4" fill="#8fb4de"/><rect x="35.4" y="460.6" width="1.3" height="7.4" fill="#8fb4de"/><path d="M18.6,463.6 H34" stroke="#333" stroke-width="1"/><path d="M17.6,463.6 L20.2,462.2 V465 Z M35,463.6 L32.4,462.2 V465 Z" fill="#333"/>
<ellipse cx="25.8" cy="528.8" rx="12.5" ry="4.7" fill="url(#shd)"/>
<circle cx="25.7" cy="516.4" r="9.6" fill="url(#sph)"/>
</svg>
<div class="abs" style="left:1427px;top:51px;width:13px;height:767px;background:#f0f0f0"></div>
<div class="abs" style="left:1427px;top:51px;width:1px;height:767px;background:#6e6e6e"></div>
<div class="abs" style="left:1428px;top:358px;width:12px;height:150px;background:#0b95c9"></div>
<svg class="abs" style="left:1395px;top:690px" width="45" height="70" viewBox="1395 690 45 70">
<path d="M1429.6,433 L1435.6,428.6 V437.4 Z" fill="#fff" transform="translate(0,0)"/>
<defs><radialGradient id="og" cx="0.4" cy="0.35" r="0.8"><stop offset="0" stop-color="#f79a3e"/><stop offset="1" stop-color="#ea741c"/></radialGradient></defs>
<circle cx="1444.6" cy="723.4" r="25" fill="#444" opacity="0.18"/>
<circle cx="1444.3" cy="722.8" r="24" fill="#444" opacity="0.18"/>
<circle cx="1443.9" cy="721.9" r="23.2" fill="#f3f3f3"/>
<circle cx="1443.9" cy="721.9" r="21.4" fill="#cf6418"/>
<circle cx="1443.9" cy="721.9" r="20.3" fill="#fd8c30"/>
<text transform="translate(1426.7,725.8) scale(1.14,1)" font-family="Liberation Sans, sans-serif" font-weight="bold" font-size="10.8" fill="#fff">62</text>
</svg>
<svg class="abs" style="left:1428px;top:424px" width="12" height="18" viewBox="1428 424 12 18"><path d="M1429.8,433 L1436,428.4 V437.6 Z" fill="#fff"/></svg>
<div class="abs" style="left:52px;top:51px;width:275px;height:202px;background:#303030"></div>
<div class="abs" style="left:53px;top:52px;width:273px;height:200px;background:#b4b4b4"></div>
<div class="abs" style="left:54px;top:53px;width:271px;height:198px;background:#4c4c4c"></div>
<div class="abs" style="left:55px;top:54px;width:269px;height:35px;background:#484848"></div>
<div class="abs" style="left:55px;top:89px;width:269px;height:161px;background:#f0f0f0"></div>
<!-- mode buttons -->
<div class="abs mb" style="left:124px;top:100.5px;border-color:#f39a1c;background:linear-gradient(#fdc070 0%,#fbab4c 40%,#f6952c 42%,#f8a23e 75%,#fcba64 100%)"></div>
<div class="abs mb" style="left:157px;top:100.5px"></div>
<div class="abs mb" style="left:190px;top:100.5px"></div>
<div class="abs mb" style="left:223px;top:100.5px"></div>
<!-- inputs -->
<div class="abs inp" style="left:133px;top:140px;width:177px;height:19px"></div>
<div class="abs inp" style="left:132px;top:168px;width:179px;height:18px"></div>
<div class="abs" style="left:297.5px;top:169px;width:14.5px;height:18px;background:linear-gradient(#cfcfcf,#bdbdbd)"></div>
<div class="abs inp" style="left:133px;top:195px;width:132px;height:20px"></div>
<div class="abs inp" style="left:133px;top:225px;width:132px;height:20px"></div>

<svg class="abs" style="left:53px;top:52px" width="274" height="201" viewBox="53 52 274 201">
<defs>
<radialGradient id="ig" cx="0.45" cy="0.3" r="0.8"><stop offset="0" stop-color="#ffffff"/><stop offset="0.6" stop-color="#ececec"/><stop offset="1" stop-color="#c9c9c9"/></radialGradient>
<radialGradient id="rg" cx="0.5" cy="0.3" r="0.8"><stop offset="0" stop-color="#fa6a62"/><stop offset="0.7" stop-color="#ec3c36"/><stop offset="1" stop-color="#d42a26"/></radialGradient>
<radialGradient id="gg" cx="0.5" cy="0.3" r="0.8"><stop offset="0" stop-color="#86cc2c"/><stop offset="0.6" stop-color="#5fae08"/><stop offset="1" stop-color="#4c9400"/></radialGradient>
<radialGradient id="shdo"><stop offset="0" stop-color="#9a5408" stop-opacity="0.6"/><stop offset="0.6" stop-color="#a86010" stop-opacity="0.34"/><stop offset="1" stop-color="#c07818" stop-opacity="0"/></radialGradient>
<radialGradient id="shd2"><stop offset="0" stop-color="#5a6464" stop-opacity="0.6"/><stop offset="0.6" stop-color="#6c7676" stop-opacity="0.36"/><stop offset="1" stop-color="#889090" stop-opacity="0"/></radialGradient>
<linearGradient id="arw" x1="0" y1="0" x2="0" y2="1"><stop offset="0" stop-color="#c8921a"/><stop offset="0.6" stop-color="#f2aa20"/><stop offset="1" stop-color="#fbd98a"/></linearGradient>
</defs>
<circle cx="72.9" cy="72.2" r="12.9" fill="#333" opacity="0.5"/>
<circle cx="72.9" cy="71.3" r="12.6" fill="url(#ig)"/>
<circle cx="72.9" cy="63.5" r="2.3" fill="#2b9fca"/>
<path d="M69.4,67.8 H74.8 V77.4 H76.8 V79.6 H69 V77.4 H71 V70 H69.4 Z" fill="#2b9fca"/>
<circle cx="269.7" cy="71.7" r="13.2" fill="url(#rg)"/>
<path d="M263.2,65.2 L276.2,78.2 M276.2,65.2 L263.2,78.2" stroke="#fff" stroke-width="2.6" stroke-linecap="round"/>
<circle cx="305.7" cy="71.7" r="13.2" fill="url(#gg)"/>
<ellipse cx="305.7" cy="65.5" rx="9.5" ry="5.5" fill="#b4e070" opacity="0.35"/>
<path d="M296.6,72.6 L299.4,70.4 L303.4,74.6 L313.6,61.6 L315.8,62.6 L304,80.4 Z" fill="#fff"/>

<ellipse cx="139.9" cy="125.6" rx="12" ry="4" fill="url(#shdo)"/>
<path d="M130.8,114.4 L139.9,123.5 L149.0,114.4 L149.0,115.7 L139.9,125.0 L130.8,115.7 Z" fill="#4a86cc"/><path d="M139.9,105.30000000000001 L149.0,114.4 L139.9,123.5 L130.8,114.4 Z" fill="#ffffff" stroke="#b8cce4" stroke-width="0.5"/>
<ellipse cx="173.2" cy="124.4" rx="11.5" ry="3.8" fill="url(#shd2)"/>
<ellipse cx="206.2" cy="124.4" rx="11.5" ry="3.8" fill="url(#shd2)"/>
<ellipse cx="239.2" cy="124.4" rx="11.5" ry="3.8" fill="url(#shd2)"/>
<path d="M163.10000000000002,113.9 L168.8,119.60000000000001 L174.5,113.9 L174.5,115.2 L168.8,121.10000000000001 L163.10000000000002,115.2 Z" fill="#4a86cc"/><path d="M168.8,108.2 L174.5,113.9 L168.8,119.60000000000001 L163.10000000000002,113.9 Z" fill="#ffffff" stroke="#b8cce4" stroke-width="0.5"/>
<path d="M172.10000000000002,113.9 L177.8,119.60000000000001 L183.5,113.9 L183.5,115.2 L177.8,121.10000000000001 L172.10000000000002,115.2 Z" fill="#4a86cc"/><path d="M177.8,108.2 L183.5,113.9 L177.8,119.60000000000001 L172.10000000000002,113.9 Z" fill="#ffffff" stroke="#b8cce4" stroke-width="0.5"/>
<path d="M195.70000000000002,113.9 L201.4,119.60000000000001 L207.1,113.9 L207.1,115.2 L201.4,121.10000000000001 L195.70000000000002,115.2 Z" fill="#4a86cc"/><path d="M201.4,108.2 L207.1,113.9 L201.4,119.60000000000001 L195.70000000000002,113.9 Z" fill="#ffffff" stroke="#b8cce4" stroke-width="0.5"/>
<path d="M204.9,113.9 L210.6,119.60000000000001 L216.29999999999998,113.9 L216.29999999999998,115.2 L210.6,121.10000000000001 L204.9,115.2 Z" fill="#4a86cc"/><path d="M210.6,108.2 L216.29999999999998,113.9 L210.6,119.60000000000001 L204.9,113.9 Z" fill="#74b4f0" stroke="#b8cce4" stroke-width="0.5"/>
<path d="M228.5,113.9 L234.2,119.60000000000001 L239.89999999999998,113.9 L239.89999999999998,115.2 L234.2,121.10000000000001 L228.5,115.2 Z" fill="#4a86cc"/><path d="M234.2,108.2 L239.89999999999998,113.9 L234.2,119.60000000000001 L228.5,113.9 Z" fill="#ffffff" stroke="#b8cce4" stroke-width="0.5"/>
<path d="M238.4,113.9 L244.1,119.60000000000001 L249.79999999999998,113.9 L249.79999999999998,115.2 L244.1,121.10000000000001 L238.4,115.2 Z" fill="#4a86cc"/><path d="M244.1,108.2 L249.79999999999998,113.9 L244.1,119.60000000000001 L238.4,113.9 Z" fill="#ffffff" stroke="#b8cce4" stroke-width="0.5"/>
<path d="M239.1,111.4 L241.3,113.6 L239.1,115.8 L236.9,113.6 Z" fill="#2f6cc4"/>
<text x="66" y="154" font-family="'Liberation Serif', 'Noto Serif CJK SC', serif" font-size="12" fill="#000">轮廓</text>
<text x="95.5" y="154" font-family="Liberation Serif, serif" font-size="11.5" fill="#000">P</text>
<text x="66" y="181.7" font-family="'Liberation Serif', 'Noto Serif CJK SC', serif" font-size="12" fill="#000">拉伸类型</text>
<text x="66" y="209.9" font-family="'Liberation Serif', 'Noto Serif CJK SC', serif" font-size="12" fill="#000">方向</text>
<text x="66" y="239.7" font-family="'Liberation Serif', 'Noto Serif CJK SC', serif" font-size="12" fill="#000">子区域</text>
<text x="137" y="154.3" font-family="'Liberation Serif', 'Noto Serif CJK SC', serif" font-size="12" fill="#000">草图</text>
<text x="161" y="154.4" font-family="Liberation Serif, serif" font-size="11.5" fill="#000">9</text>
<text x="135.6" y="182" font-family="Liberation Serif, serif" font-size="11.5" fill="#000">1</text>
<text x="146.5" y="181.7" font-family="'Liberation Serif', 'Noto Serif CJK SC', serif" font-size="12" fill="#000">边</text>
<path d="M301.6,175.6 H308 L304.8,179 Z" fill="#444"/>
<g transform="translate(284,205.6)"><path d="M-2.8,-7 H2.8 V-1.6 H6 L0,5 L-6,-1.6 H-2.8 Z" fill="#f6e6b8" stroke="#a8a840" stroke-width="0.9"/><path d="M-1.4,-5.2 H1.4 V-0.4 H3.4 L0,3.4 L-3.4,-0.4 H-1.4 Z" fill="url(#arw)"/><rect x="-6" y="6" width="12" height="1.1" fill="#9cac3c"/></g>
<g transform="translate(284,235.6)"><path d="M-2.8,-7 H2.8 V-1.6 H6 L0,5 L-6,-1.6 H-2.8 Z" fill="#f6e6b8" stroke="#a8a840" stroke-width="0.9"/><path d="M-1.4,-5.2 H1.4 V-0.4 H3.4 L0,3.4 L-3.4,-0.4 H-1.4 Z" fill="url(#arw)"/><rect x="-6" y="6" width="12" height="1.1" fill="#9cac3c"/></g>
</svg>
<div class="abs" style="left:0;top:818px;width:1440px;height:1px;background:#5a5a5a"></div>
<div class="abs" style="left:0;top:819px;width:1440px;height:51px;background:#dce0e0"></div>
<div class="abs" style="left:0;top:870px;width:1440px;height:4px;background:#2b6fdf"></div>
<div class="abs" style="left:0;top:870px;width:93px;height:4px;background:linear-gradient(#3f9a48,#58b25c)"></div>
<div class="abs" style="left:101px;top:872px;width:40px;height:2px;background:#8db8f2"></div>
<div class="abs" style="left:1345px;top:870px;width:95px;height:4px;background:#169fe9"></div>
<div class="abs" style="left:1344px;top:870px;width:1px;height:4px;background:#0e3c9c"></div>
<div class="abs inp" style="left:821px;top:834px;width:91px;height:18px"></div>
<div class="abs" style="left:898.5px;top:835px;width:14.5px;height:18px;background:linear-gradient(#cdcdcd,#bcbcbc)"></div>

<svg class="abs" style="left:0;top:819px" width="1440" height="51" viewBox="0 819 1440 51">
<defs><radialGradient id="shd3"><stop offset="0" stop-color="#5c6060" stop-opacity="0.62"/><stop offset="0.55" stop-color="#747878" stop-opacity="0.36"/><stop offset="1" stop-color="#999" stop-opacity="0"/></radialGradient>
<linearGradient id="pring" x1="0" y1="0" x2="1" y2="1"><stop offset="0" stop-color="#5cc4e0"/><stop offset="1" stop-color="#1a84a8"/></linearGradient></defs>
<circle cx="19.8" cy="844" r="13.4" fill="#777" opacity="0.45"/><circle cx="19.2" cy="843" r="12.6" fill="#e4ecee" stroke="url(#pring)" stroke-width="1.8"/><circle cx="19.2" cy="843" r="10.9" fill="none" stroke="#fff" stroke-width="1"/><circle cx="19.2" cy="843" r="10.1" fill="none" stroke="#2a98bc" stroke-width="0.9"/>
<text x="19.4" y="849.4" text-anchor="middle" font-family="Liberation Sans, sans-serif" font-weight="bold" font-size="17.5" fill="#1a8aae">P</text>
<circle cx="1408.1" cy="843.6" r="13.4" fill="#777" opacity="0.45"/><circle cx="1407.5" cy="842.6" r="12.6" fill="#e4ecee" stroke="url(#pring)" stroke-width="1.8"/><circle cx="1407.5" cy="842.6" r="10.9" fill="none" stroke="#fff" stroke-width="1"/><circle cx="1407.5" cy="842.6" r="10.1" fill="none" stroke="#2a98bc" stroke-width="0.9"/>
<text x="1407.7" y="849.0" text-anchor="middle" font-family="Liberation Sans, sans-serif" font-weight="bold" font-size="17.5" fill="#1a8aae">M</text>
<path d="M40.6,857.2 H46.8 L43.7,860.6 Z" fill="#222"/>
<ellipse cx="551.5" cy="853.4" rx="12.5" ry="4.2" fill="url(#shd3)"/>
<rect x="542.4" y="833.4" width="17.8" height="17.4" fill="#fff" stroke="#2f78cf" stroke-width="1.4"/><path d="M550.8,833.4 V842.8 H560.2" fill="none" stroke="#2f78cf" stroke-width="1.4"/>
<ellipse cx="599.6" cy="851.4" rx="12.5" ry="4.2" fill="url(#shd3)"/>
<path d="M588.6,841.4 C592,836.6 596,835.4 599.4,835.4 C603,835.4 607,836.8 610.2,841.4 C607,846 603,847.2 599.4,847.2 C596,847.2 592,846 588.6,841.4 Z" fill="#2f78cf"/><circle cx="599.4" cy="841.3" r="3.9" fill="#dfe6ee"/><circle cx="599.4" cy="841.3" r="2" fill="#2f78cf"/>
<ellipse cx="649.6" cy="853.8" rx="12.5" ry="4.2" fill="url(#shd3)"/>
<path d="M648.8,832.8 L657.8,837.8 L657.8,847.8 L648.8,852.6 L640,847.8 L640,837.8 Z" fill="#fff" stroke="#2f78cf" stroke-width="1.1"/><path d="M640,837.8 L648.8,842.6 L657.8,837.8 M648.8,842.6 V852.6" fill="none" stroke="#2f78cf" stroke-width="0.9"/><path d="M648.8,832.8 V842.6 M640,847.8 L648.8,842.6 L657.8,847.8" fill="none" stroke="#b8d0ee" stroke-width="0.8"/>
<ellipse cx="698.4" cy="853" rx="12.5" ry="4.2" fill="url(#shd3)"/>
<path d="M688,838.4 L697.4,834.4 L707.6,838 L707.6,846.6 L698,850.4 L688,846.6 Z" fill="#92b8e4"/><path d="M688,838.4 L697.4,834.4 L707.6,838 L698,841.6 Z" fill="#aacaee"/><path d="M698,841.6 L707.6,838 L707.6,846.6 L698,850.4 Z" fill="#84abd9"/>
<ellipse cx="747" cy="853.6" rx="12.5" ry="4.2" fill="url(#shd3)"/>
<circle cx="744.3" cy="839.4" r="5.6" fill="#dfe6ee" stroke="#2f78cf" stroke-width="1.9"/><path d="M741.6,838 L744.3,836.6 L747,838 V841 L744.3,842.4 L741.6,841 Z" fill="#c6d6ea" stroke="#2f78cf" stroke-width="0.5"/><path d="M748.6,843.8 L756,851.2" stroke="#2f78cf" stroke-width="2.8" stroke-linecap="round"/>
<ellipse cx="796" cy="853.8" rx="12.5" ry="4.2" fill="url(#shd3)"/>
<rect x="791.2" y="834.4" width="9.4" height="5.4" rx="1" fill="#dfe6ee" stroke="#2f78cf" stroke-width="1.2"/><rect x="787.6" y="839.2" width="16.6" height="8.2" rx="1.6" fill="#2f78cf"/><rect x="791.2" y="843.8" width="9.4" height="6" fill="#eef3f8" stroke="#2f78cf" stroke-width="1.2"/><rect x="793" y="845.4" width="4.6" height="1" fill="#2f78cf"/><rect x="793" y="847.4" width="3" height="1" fill="#2f78cf"/><circle cx="801.6" cy="841.4" r="0.8" fill="#fff"/>
<path d="M902.6,841.6 H909 L905.8,845 Z" fill="#444"/>
</svg>
<svg class="abs" style="left:1250px;top:838px" width="190" height="36" viewBox="1250 838 190 36">
<rect x="1277" y="846.6" width="163" height="23" fill="#fbfdff" stroke="#c9d8ea" stroke-width="0.8"/>
<g transform="rotate(-13 1269 856.5)"><rect x="1256.6" y="844.4" width="24.6" height="24.6" rx="4.5" fill="#f1571b"/>
<text x="1269" y="866.4" text-anchor="middle" font-family="Liberation Sans, sans-serif" font-weight="bold" font-style="italic" font-size="26" fill="#fff" transform="translate(1269,0) scale(1.15,1) translate(-1269,0)">S</text></g>

<text x="1296.1" y="863.2" text-anchor="middle" font-family="'Liberation Sans', 'Noto Sans CJK SC', sans-serif" font-weight="bold" font-size="15" fill="#1d6fd0">中</text>
<path d="M1320.6,851 C1326,854 1326.4,862.6 1319.8,864.6 C1316.6,865.4 1313.6,864.2 1312,862 C1317.6,862.6 1321.8,857.6 1320.6,851 Z" fill="#1d6fd0"/>
<circle cx="1336" cy="853.6" r="1.7" fill="none" stroke="#1d6fd0" stroke-width="1.2"/>
<path d="M1341.2,858.6 a1.9,1.9 0 1 1 2.2,2.4 C1343.4,862.8 1342.4,864.2 1340.8,864.8 C1341.8,863.4 1342,862 1341.2,858.6 Z" fill="#1d6fd0"/>
<rect x="1354.6" y="852" width="15.4" height="10.6" rx="1.4" fill="#1d6fd0"/>
<g fill="#fff"><rect x="1356.4" y="854" width="1.6" height="1.6"/><rect x="1359.2" y="854" width="1.6" height="1.6"/><rect x="1362" y="854" width="1.6" height="1.6"/><rect x="1364.8" y="854" width="1.6" height="1.6"/><rect x="1367.2" y="854" width="1.2" height="1.6"/><rect x="1357.6" y="856.6" width="1.6" height="1.6"/><rect x="1360.4" y="856.6" width="1.6" height="1.6"/><rect x="1363.2" y="856.6" width="1.6" height="1.6"/><rect x="1366" y="856.6" width="1.6" height="1.6"/><rect x="1357.4" y="859.4" width="9.6" height="1.5"/></g>
<circle cx="1383.6" cy="853.6" r="3.2" fill="#c3c9d2"/><path d="M1378,864.4 C1378,859.6 1380.4,857.6 1383.6,857.6 C1386.8,857.6 1389.2,859.6 1389.2,864.4 Z" fill="#c3c9d2"/>
<text x="1385.4" y="866" font-family="Liberation Sans, sans-serif" font-weight="bold" font-size="7.5" fill="#c3c9d2" stroke="#fbfdff" stroke-width="0.3">14</text>
<path d="M1403,851.4 C1404.4,853 1407.6,853 1409,851.4 L1413.6,853.8 L1412,857.8 L1410,857 V864.6 H1402 V857 L1400,857.8 L1398.4,853.8 Z" fill="#1d6fd0"/>
<path d="M1422,866 L1420.6,864.6 L1427.6,857.6 C1426.6,855 1427.6,852.4 1430.2,851.2 C1431.4,850.6 1433,850.6 1434,851 L1430.8,854.2 L1431.4,856.2 L1433.4,856.8 L1436.6,853.6 C1437.2,856 1436.2,858.6 1433.8,859.6 C1432.4,860.2 1430.8,860.2 1429.6,859.6 L1423,866 Z" fill="#1d6fd0"/>
</svg>
</body></html>
